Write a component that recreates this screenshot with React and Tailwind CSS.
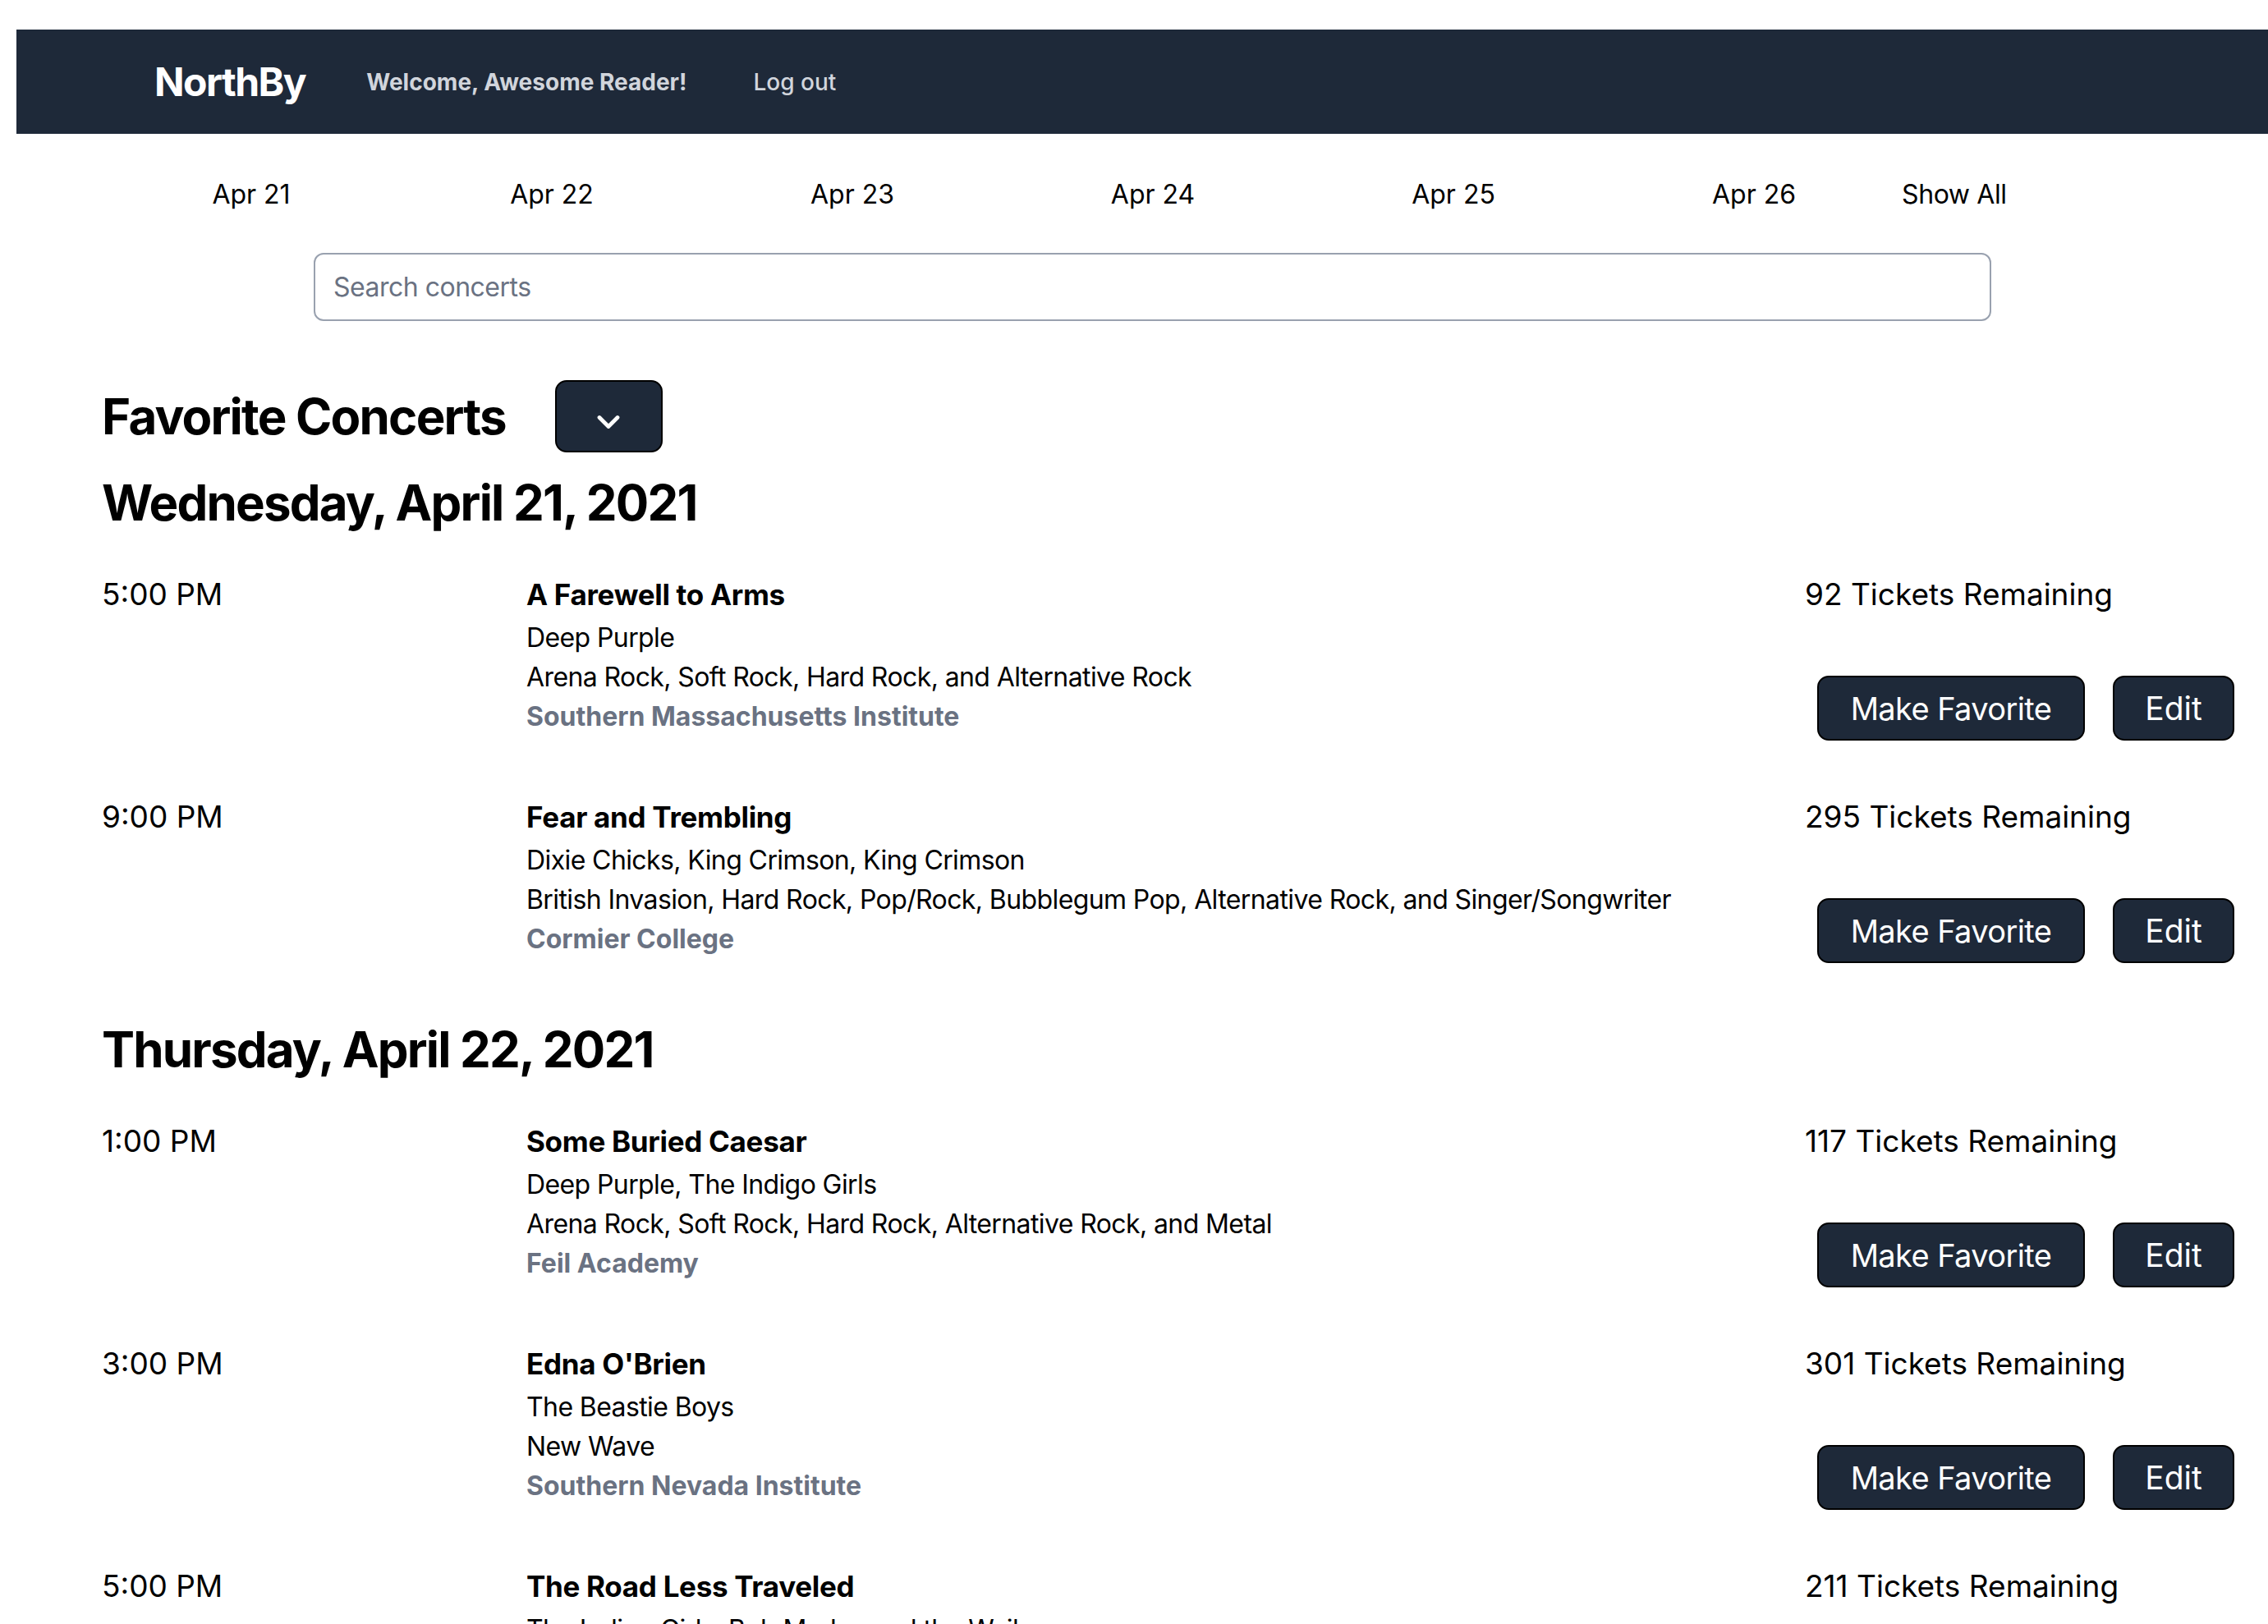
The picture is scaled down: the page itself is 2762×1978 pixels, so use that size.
import { ChevronDown } from 'lucide-react';

const days = [
  {
    label: 'Wednesday, April 21, 2021',
    concerts: [
      {
        time: '5:00 PM',
        title: 'A Farewell to Arms',
        artists: 'Deep Purple',
        genres: 'Arena Rock, Soft Rock, Hard Rock, and Alternative Rock',
        venue: 'Southern Massachusetts Institute',
        tickets: 92,
      },
      {
        time: '9:00 PM',
        title: 'Fear and Trembling',
        artists: 'Dixie Chicks, King Crimson, King Crimson',
        genres: 'British Invasion, Hard Rock, Pop/Rock, Bubblegum Pop, Alternative Rock, and Singer/Songwriter',
        venue: 'Cormier College',
        tickets: 295,
      },
    ],
  },
  {
    label: 'Thursday, April 22, 2021',
    concerts: [
      {
        time: '1:00 PM',
        title: 'Some Buried Caesar',
        artists: 'Deep Purple, The Indigo Girls',
        genres: 'Arena Rock, Soft Rock, Hard Rock, Alternative Rock, and Metal',
        venue: 'Feil Academy',
        tickets: 117,
      },
      {
        time: '3:00 PM',
        title: "Edna O'Brien",
        artists: 'The Beastie Boys',
        genres: 'New Wave',
        venue: 'Southern Nevada Institute',
        tickets: 301,
      },
      {
        time: '5:00 PM',
        title: 'The Road Less Traveled',
        artists: 'The Indigo Girls, Bob Marley and the Wailers',
        genres: 'Reggae, Folk Rock, and Pop',
        venue: 'Northern Vermont College',
        tickets: 211,
      },
    ],
  },
];

const dates = ['Apr 21', 'Apr 22', 'Apr 23', 'Apr 24', 'Apr 25', 'Apr 26'];

const ConcertRow = ({ concert }) => (
  <div className="flex items-start mb-[65px]">
    <div className="w-[517px] shrink-0 text-[37px] leading-[56px] text-black">{concert.time}</div>
    <div className="flex-1 min-w-0">
      <h3 className="text-[35px] leading-[57px] font-bold text-black tracking-[-0.3px]">{concert.title}</h3>
      <p className="text-[32px] leading-[48px] text-black tracking-[-0.6px]">{concert.artists}</p>
      <p className="text-[32px] leading-[48px] text-black tracking-[-0.6px]">{concert.genres}</p>
      <p className="text-[32px] leading-[48px] font-bold text-gray-500">{concert.venue}</p>
    </div>
    <div className="w-[523px] shrink-0 mr-[41px]">
      <p className="text-[37px] leading-[56px] text-black">{concert.tickets} Tickets Remaining</p>
      <div className="mt-[71px] flex justify-end gap-[34px]">
        <button className="w-[326px] h-[79px] rounded-[14px] border-2 border-black bg-gray-800 text-white text-[38px] leading-[56px] whitespace-nowrap tracking-[-0.6px]">
          Make Favorite
        </button>
        <button className="w-[148px] h-[79px] rounded-[14px] border-2 border-black bg-gray-800 text-white text-[39px] leading-[56px] whitespace-nowrap">
          Edit
        </button>
      </div>
    </div>
  </div>
);

const App = () => {
  return (
    <div className="bg-white min-h-screen pt-[36px] font-['Inter',sans-serif] text-black">
      <nav className="ml-[20px] h-[127px] bg-gray-800 flex items-center pl-[168px]">
        <span className="text-[48px] font-bold text-white tracking-[-1.5px]">NorthBy</span>
        <span className="ml-[74px] text-[28px] font-bold text-gray-300">Welcome, Awesome Reader!</span>
        <a href="#" className="ml-[81px] text-[28px] font-medium text-gray-300">Log out</a>
      </nav>

      <div className="mt-[50px] flex pl-[123px] h-[48px] text-[32px] leading-[48px]">
        {dates.map(d => (
          <a key={d} href="#" className="w-[366px] text-center">{d}</a>
        ))}
        <a href="#" className="-ml-[3px] tracking-[-0.4px]">Show All</a>
      </div>

      <div className="mt-[47px] pl-[382px] pr-[337px]">
        <input
          type="text"
          placeholder="Search concerts"
          className="w-full h-[83px] rounded-[12px] border-2 border-gray-400 px-[22px] text-[32px] tracking-[-0.5px] placeholder:text-gray-500 outline-none"
        />
      </div>

      <main className="pl-[124px]">
        <div className="mt-[72px] flex items-center h-[88px]">
          <h2 className="text-[60px] leading-[72px] font-bold tracking-[-1.8px]">Favorite Concerts</h2>
          <button className="ml-[60px] w-[131px] h-[88px] rounded-[14px] border-2 border-black bg-gray-800 flex items-center justify-center">
            <ChevronDown className="w-[44px] h-[44px] text-white mt-[14px]" strokeWidth={2.6} />
          </button>
        </div>

        {days.map((day, i) => (
          <section key={day.label} className={i === 0 ? 'pt-[25px]' : 'pt-[4px]'}>
            <h2 className="text-[60px] leading-[72px] font-bold tracking-[-1.8px]">
              {day.label}
            </h2>
            <div className="mt-[48px]">
              {day.concerts.map(c => (
                <ConcertRow key={c.title} concert={c} />
              ))}
            </div>
          </section>
        ))}
      </main>
    </div>
  );
};

export default App;
